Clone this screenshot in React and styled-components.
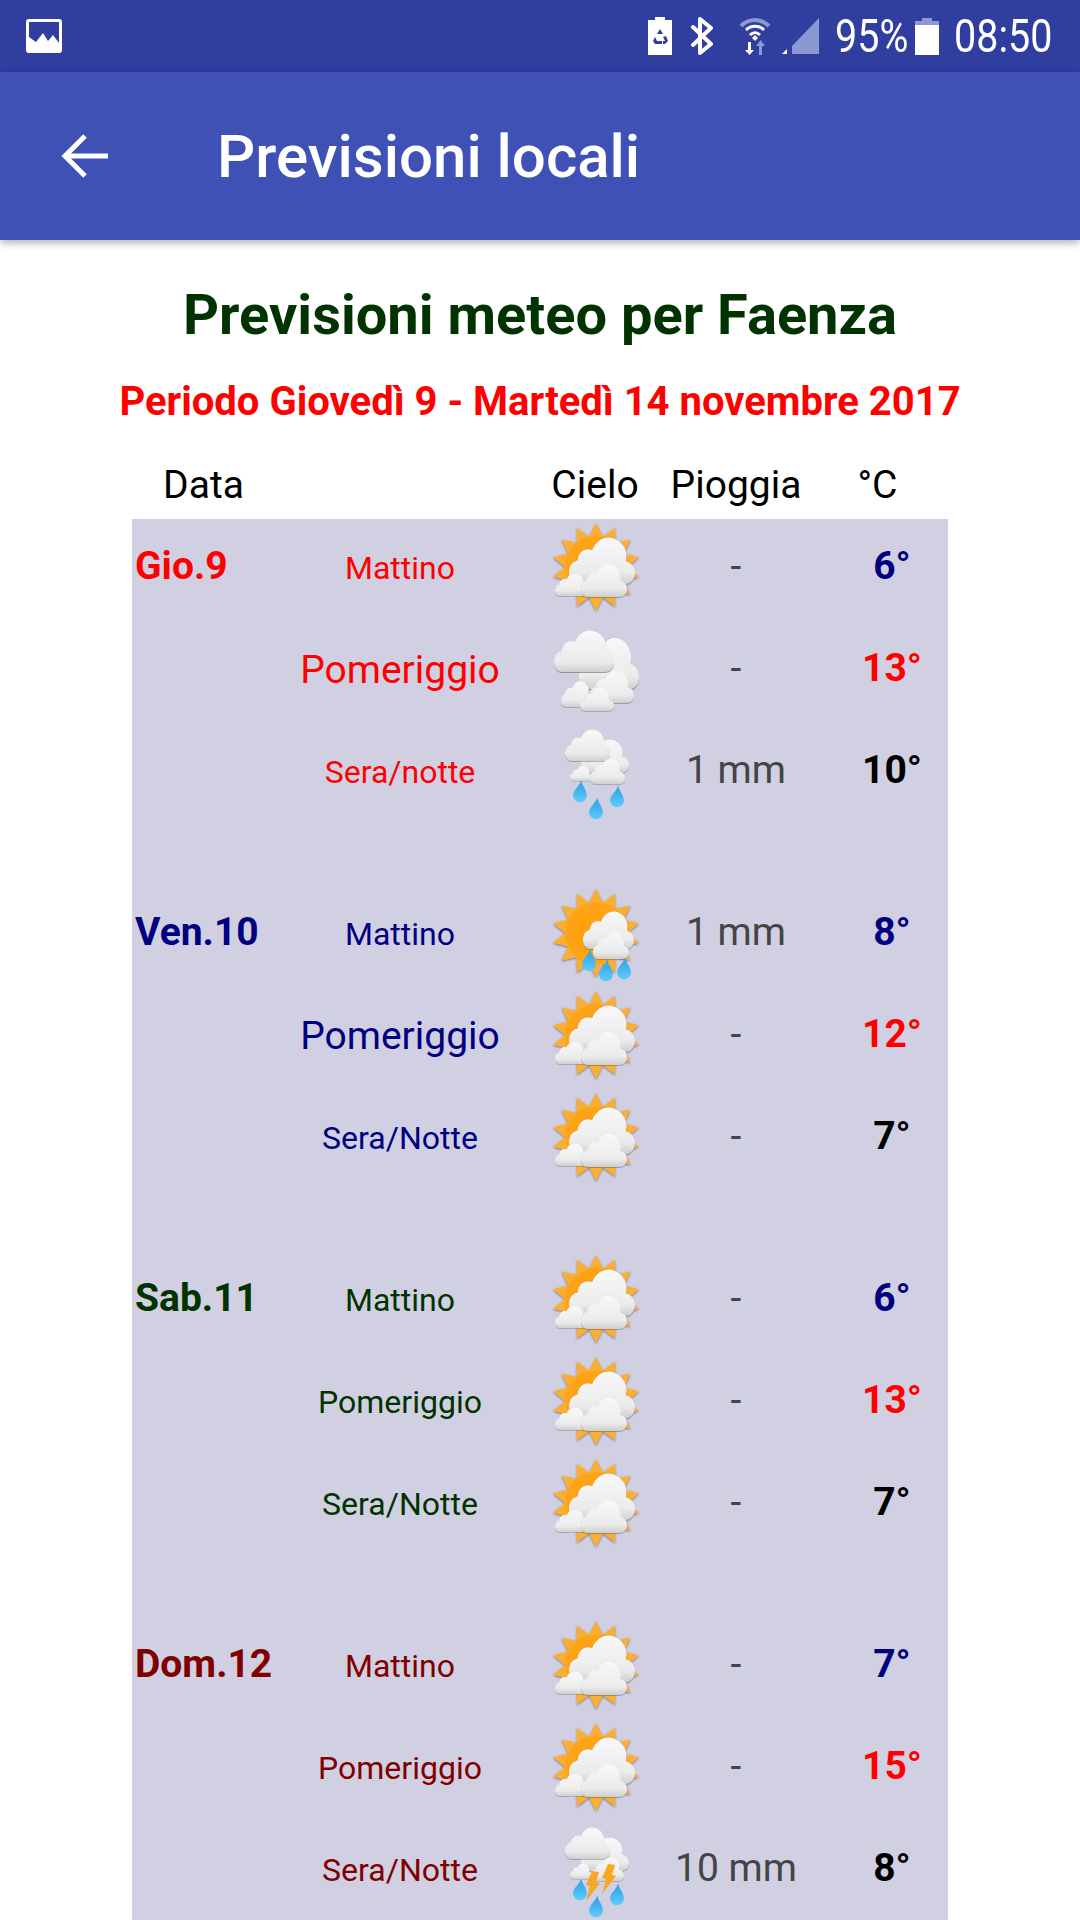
import React from 'react';
import styled, { createGlobalStyle } from 'styled-components';

const GlobalStyle = createGlobalStyle`
  html, body {
    margin: 0;
    padding: 0;
    background: #ffffff;
    font-family: Roboto, "Liberation Sans", sans-serif;
  }
`;

const Page = styled.div`
  width: 1080px;
  height: 1920px;
  overflow: hidden;
  display: flex;
  flex-direction: column;
`;

const StatusBar = styled.div`
  height: 72px;
  flex: none;
  background: #303f9f;
  display: flex;
  align-items: center;
  padding: 0 30px 0 26px;
`;

const StatusIcons = styled.div`
  margin-left: auto;
  display: flex;
  align-items: center;
`;

const StatusGap = styled.span`
  width: ${(p) => p.$width}px;
`;

const StatusText = styled.span`
  color: #ffffff;
  font-size: 47px;
  line-height: 72px;
  display: inline-block;
  width: ${(p) => p.$width}px;
  margin-left: ${(p) => p.$left}px;
  white-space: nowrap;
  transform: scaleX(0.84);
  transform-origin: left center;
`;

const AppBar = styled.div`
  height: 168px;
  flex: none;
  background: #3f51b5;
  box-shadow: 0 3px 8px rgba(0, 0, 0, 0.3);
  display: flex;
  align-items: center;
  padding-left: 60px;
  gap: 107px;
  position: relative;
`;

const AppTitle = styled.div`
  color: #ffffff;
  font-size: 60px;
  font-weight: 500;
`;

const Heading = styled.h1`
  margin: 0;
  padding-top: 45px;
  text-align: center;
  color: #003300;
  font-size: 56px;
  line-height: 60px;
  font-weight: 700;
`;

const Period = styled.h2`
  margin: 0;
  padding-top: 35px;
  text-align: center;
  color: #ff0000;
  font-size: 40px;
  line-height: 44px;
  font-weight: 700;
`;

const Table = styled.div`
  width: 816px;
  margin: 0 0 0 132px;
  flex: 1;
`;

const Row = styled.div`
  display: grid;
  grid-template-columns: 138px 260px 130px 152px 136px;
  align-items: center;
`;

const HeaderRow = styled(Row)`
  height: 68px;
  margin-top: 27px;
  font-size: 39px;
  color: #000000;
  text-align: center;
  line-height: 68px;
`;

const HeaderCell = styled.div`
  padding-left: ${(p) => p.$left || 0}px;
  padding-right: ${(p) => p.$right || 0}px;
`;

const Body = styled.div`
  background: #d1d0e3;
  height: 1410px;
`;

const DayGroup = styled.div`
  margin-bottom: 60px;
`;

const ForecastRow = styled(Row)`
  height: 102px;
  box-sizing: border-box;
  padding-bottom: 8px;
  grid-template-rows: 94px;
`;

const DayLabel = styled.div`
  padding-left: 3px;
  font-size: 39px;
  font-weight: 700;
  white-space: nowrap;
  color: ${(p) => p.$color};
`;

const PeriodLabel = styled.div`
  text-align: center;
  white-space: nowrap;
  padding-top: 4px;
  font-size: ${(p) => (p.$big ? 39 : 32)}px;
  color: ${(p) => p.$color};
`;

const IconCell = styled.div`
  display: flex;
  justify-content: center;
  padding-left: 6px;
  margin-top: 4px;
  margin-bottom: -4px;
`;

const IconSvg = styled.svg`
  overflow: visible;
`;

const Rain = styled.div`
  text-align: center;
  font-size: 39px;
  color: #444444;
`;

const Temp = styled.div`
  padding-left: 24px;
  text-align: center;
  font-size: 39px;
  font-weight: 700;
  color: ${(p) => p.$color};
`;

const StarSun = ({ cx = 43, cy = 42 }) => {
  const pts = [];
  const n = 14;
  for (let i = 0; i < n * 2; i++) {
    const r = i % 2 === 0 ? 44 : 31;
    const a = (Math.PI * i) / n - Math.PI / 2;
    pts.push(`${(cx + r * Math.cos(a)).toFixed(1)},${(cy + r * Math.sin(a)).toFixed(1)}`);
  }
  return (
    <g filter="url(#soft)">
      <polygon points={pts.join(' ')} fill="#fbaf30" />
      <circle cx={cx} cy={cy} r="31" fill="url(#sunFill)" />
    </g>
  );
};

const Cloud = ({ x, y, w, h }) => (
  <g transform={`translate(${x} ${y}) scale(${w / 100} ${h / 60})`} filter="url(#soft)">
    <path
      d="M14 60C5 60 0 53 0 45C0 37 5 31 13 30C14 19 25 13 35 17C41 4 55 -2 68 2C82 6 90 18 86 31C95 33 100 39 100 46C100 54 94 60 84 60Z"
      fill="url(#cloudFill)"
    />
  </g>
);

const Drop = ({ x, y }) => (
  <path
    transform={`translate(${x} ${y}) scale(1.15)`}
    d="M1 -10C2 -5 6 -2 6 3A6 6 0 0 1 -6 3C-6 -2 -1 -4 1 -10Z"
    fill="url(#dropFill)"
  />
);

const Bolt = ({ x, y }) => (
  <path
    transform={`translate(${x} ${y})`}
    d="M3 0L10 1L7 11L11 12L-3 30L1 15L-3 14Z"
    fill="#f7a823"
  />
);

const scenes = {
  sun: (
    <>
      <StarSun />
      <Cloud x={16} y={12} w={66} h={47} />
      <Cloud x={2} y={48} w={33} h={23} />
      <Cloud x={28} y={38} w={46} h={34} />
    </>
  ),
  clouds: (
    <>
      <Cloud x={26} y={10} w={60} h={52} />
      <Cloud x={1} y={3} w={60} h={42} />
      <Cloud x={8} y={54} w={32} h={26} />
      <Cloud x={37} y={43} w={44} h={33} />
      <Cloud x={27} y={60} w={34} h={24} />
    </>
  ),
  rain: (
    <>
      <Cloud x={28} y={10} w={48} h={34} />
      <Cloud x={12} y={0} w={45} h={32} />
      <Cloud x={17} y={36} w={22} h={16} />
      <Cloud x={37} y={29} w={35} h={26} />
      <Drop x={27} y={63} />
      <Drop x={43} y={80} />
      <Drop x={64} y={68} />
    </>
  ),
  sunRain: (
    <>
      <StarSun />
      <Cloud x={30} y={20} w={51} h={38} />
      <Cloud x={40} y={40} w={36} h={28} />
      <Drop x={36} y={70} />
      <Drop x={53} y={80} />
      <Drop x={71} y={78} />
    </>
  ),
  storm: (
    <>
      <Cloud x={28} y={10} w={48} h={34} />
      <Cloud x={12} y={0} w={45} h={32} />
      <Cloud x={17} y={36} w={22} h={16} />
      <Cloud x={38} y={30} w={33} h={24} />
      <Drop x={27} y={63} />
      <Drop x={43} y={80} />
      <Drop x={64} y={68} />
      <Bolt x={36} y={44} />
      <Bolt x={52} y={37} />
    </>
  ),
};

const WeatherIcon = ({ type }) => (
  <IconSvg width="90" height="90" viewBox="0 0 90 90">
    <defs>
      <linearGradient id="cloudFill" x1="0" y1="0" x2="0" y2="1">
        <stop offset="0" stopColor="#f8f8f8" />
        <stop offset="0.75" stopColor="#ebebeb" />
        <stop offset="1" stopColor="#cfcfcf" />
      </linearGradient>
      <radialGradient id="sunFill" cx="0.5" cy="0.5" r="0.5">
        <stop offset="0" stopColor="#ff9d00" />
        <stop offset="1" stopColor="#ffa41a" />
      </radialGradient>
      <linearGradient id="dropFill" x1="0" y1="0" x2="0" y2="1">
        <stop offset="0" stopColor="#2aa0e4" />
        <stop offset="1" stopColor="#5fcbfb" />
      </linearGradient>
      <filter id="soft" x="-20%" y="-20%" width="140%" height="150%">
        <feDropShadow dx="0" dy="1" stdDeviation="1.1" floodColor="#4c4c5c" floodOpacity="0.7" />
      </filter>
    </defs>
    {scenes[type]}
  </IconSvg>
);

const PictureIcon = () => (
  <svg width="36" height="36" viewBox="0 0 36 36">
    <rect x="0" y="1" width="36" height="34" rx="3" fill="#ffffff" />
    <path d="M3 4H33V25L27 17L22 23L17 15L10 24L3 19Z" fill="#303f9f" />
  </svg>
);

const SaverIcon = () => (
  <svg width="24" height="38" viewBox="0 0 24 38">
    <path d="M7 0H17V3H24V38H0V3H7Z" fill="#ffffff" />
    <path
      d="M12 12L15 17H9ZM7 20L9 24H14V27H7L5 24ZM18 19L20 24L17 27H15V24H17L15 20Z"
      fill="#303f9f"
    />
  </svg>
);

const BluetoothIcon = () => (
  <svg width="24" height="38" viewBox="0 0 24 38">
    <path
      d="M3 10L21 27L10 36V2L21 11L3 28"
      fill="none"
      stroke="#ffffff"
      strokeWidth="4"
      strokeLinejoin="round"
      strokeLinecap="round"
    />
  </svg>
);

const WifiIcon = () => (
  <svg width="32" height="38" viewBox="0 0 32 38">
    <path d="M2 9C10 1 22 1 30 9" fill="none" stroke="#8c98d2" strokeWidth="4" />
    <path d="M7 13C12 8 20 8 25 13" fill="none" stroke="#ffffff" strokeWidth="3" />
    <path d="M11 18C14 15 18 15 21 18" fill="none" stroke="#ffffff" strokeWidth="3" />
    <path d="M13 21L16 18L19 21L16 24Z" fill="#ffffff" />
    <path d="M9 25H12V33H15L10.500 38L6 33H9Z" fill="#ffffff" />
    <path d="M20 25H23V38H20ZM21.500 23L26 29H17Z" fill="#8c98d2" />
  </svg>
);

const SignalIcon = () => (
  <svg width="37" height="36" viewBox="0 0 37 36">
    <path d="M37 0V36H10V28Z" fill="#8c98d2" />
    <path d="M5 31V36H0Z" fill="#ffffff" />
  </svg>
);

const BatteryIcon = () => (
  <svg width="24" height="37" viewBox="0 0 24 37">
    <path d="M7 0H17V3H24V7H0V3H7Z" fill="#8c98d2" />
    <rect x="0" y="7" width="24" height="30" fill="#ffffff" />
  </svg>
);

const BackArrow = () => (
  <svg width="50" height="50" viewBox="0 0 50 50">
    <path
      d="M48 25H5M25 5L5 25L25 45"
      fill="none"
      stroke="#ffffff"
      strokeWidth="5"
    />
  </svg>
);

const COLD = '#000080';
const HOT = '#ff0000';
const MILD = '#000000';

const days = [
  {
    label: 'Gio.9',
    color: '#ff0000',
    rows: [
      { period: 'Mattino', icon: 'sun', rain: '-', temp: '6°', tempColor: COLD },
      { period: 'Pomeriggio', big: true, icon: 'clouds', rain: '-', temp: '13°', tempColor: HOT },
      { period: 'Sera/notte', icon: 'rain', rain: '1 mm', temp: '10°', tempColor: MILD },
    ],
  },
  {
    label: 'Ven.10',
    color: '#000080',
    rows: [
      { period: 'Mattino', icon: 'sunRain', rain: '1 mm', temp: '8°', tempColor: COLD },
      { period: 'Pomeriggio', big: true, icon: 'sun', rain: '-', temp: '12°', tempColor: HOT },
      { period: 'Sera/Notte', icon: 'sun', rain: '-', temp: '7°', tempColor: MILD },
    ],
  },
  {
    label: 'Sab.11',
    color: '#003300',
    rows: [
      { period: 'Mattino', icon: 'sun', rain: '-', temp: '6°', tempColor: COLD },
      { period: 'Pomeriggio', icon: 'sun', rain: '-', temp: '13°', tempColor: HOT },
      { period: 'Sera/Notte', icon: 'sun', rain: '-', temp: '7°', tempColor: MILD },
    ],
  },
  {
    label: 'Dom.12',
    color: '#800000',
    rows: [
      { period: 'Mattino', icon: 'sun', rain: '-', temp: '7°', tempColor: COLD },
      { period: 'Pomeriggio', icon: 'sun', rain: '-', temp: '15°', tempColor: HOT },
      { period: 'Sera/Notte', icon: 'storm', rain: '10 mm', temp: '8°', tempColor: MILD },
    ],
  },
];

function App() {
  return (
    <Page>
      <GlobalStyle />
      <StatusBar>
        <PictureIcon />
        <StatusIcons>
          <SaverIcon />
          <StatusGap $width={18} />
          <BluetoothIcon />
          <StatusGap $width={25} />
          <WifiIcon />
          <StatusGap $width={11} />
          <SignalIcon />
          <StatusText $left={16} $width={70}>95%</StatusText>
          <StatusGap $width={10} />
          <BatteryIcon />
          <StatusText $left={15} $width={96}>08:50</StatusText>
        </StatusIcons>
      </StatusBar>
      <AppBar>
        <BackArrow />
        <AppTitle>Previsioni locali</AppTitle>
      </AppBar>
      <Heading>Previsioni meteo per Faenza</Heading>
      <Period>Periodo Giovedì 9 - Martedì 14 novembre 2017</Period>
      <Table>
        <HeaderRow>
          <HeaderCell $left={5}>Data</HeaderCell>
          <HeaderCell />
          <HeaderCell>Cielo</HeaderCell>
          <HeaderCell>Pioggia</HeaderCell>
          <HeaderCell $right={5}>°C</HeaderCell>
        </HeaderRow>
        <Body>
          {days.map((day) => (
            <DayGroup key={day.label}>
              {day.rows.map((row, i) => (
                <ForecastRow key={row.period}>
                  <DayLabel $color={day.color}>{i === 0 ? day.label : ''}</DayLabel>
                  <PeriodLabel $color={day.color} $big={row.big}>{row.period}</PeriodLabel>
                  <IconCell><WeatherIcon type={row.icon} /></IconCell>
                  <Rain>{row.rain}</Rain>
                  <Temp $color={row.tempColor}>{row.temp}</Temp>
                </ForecastRow>
              ))}
            </DayGroup>
          ))}
        </Body>
      </Table>
    </Page>
  );
}

export default App;
